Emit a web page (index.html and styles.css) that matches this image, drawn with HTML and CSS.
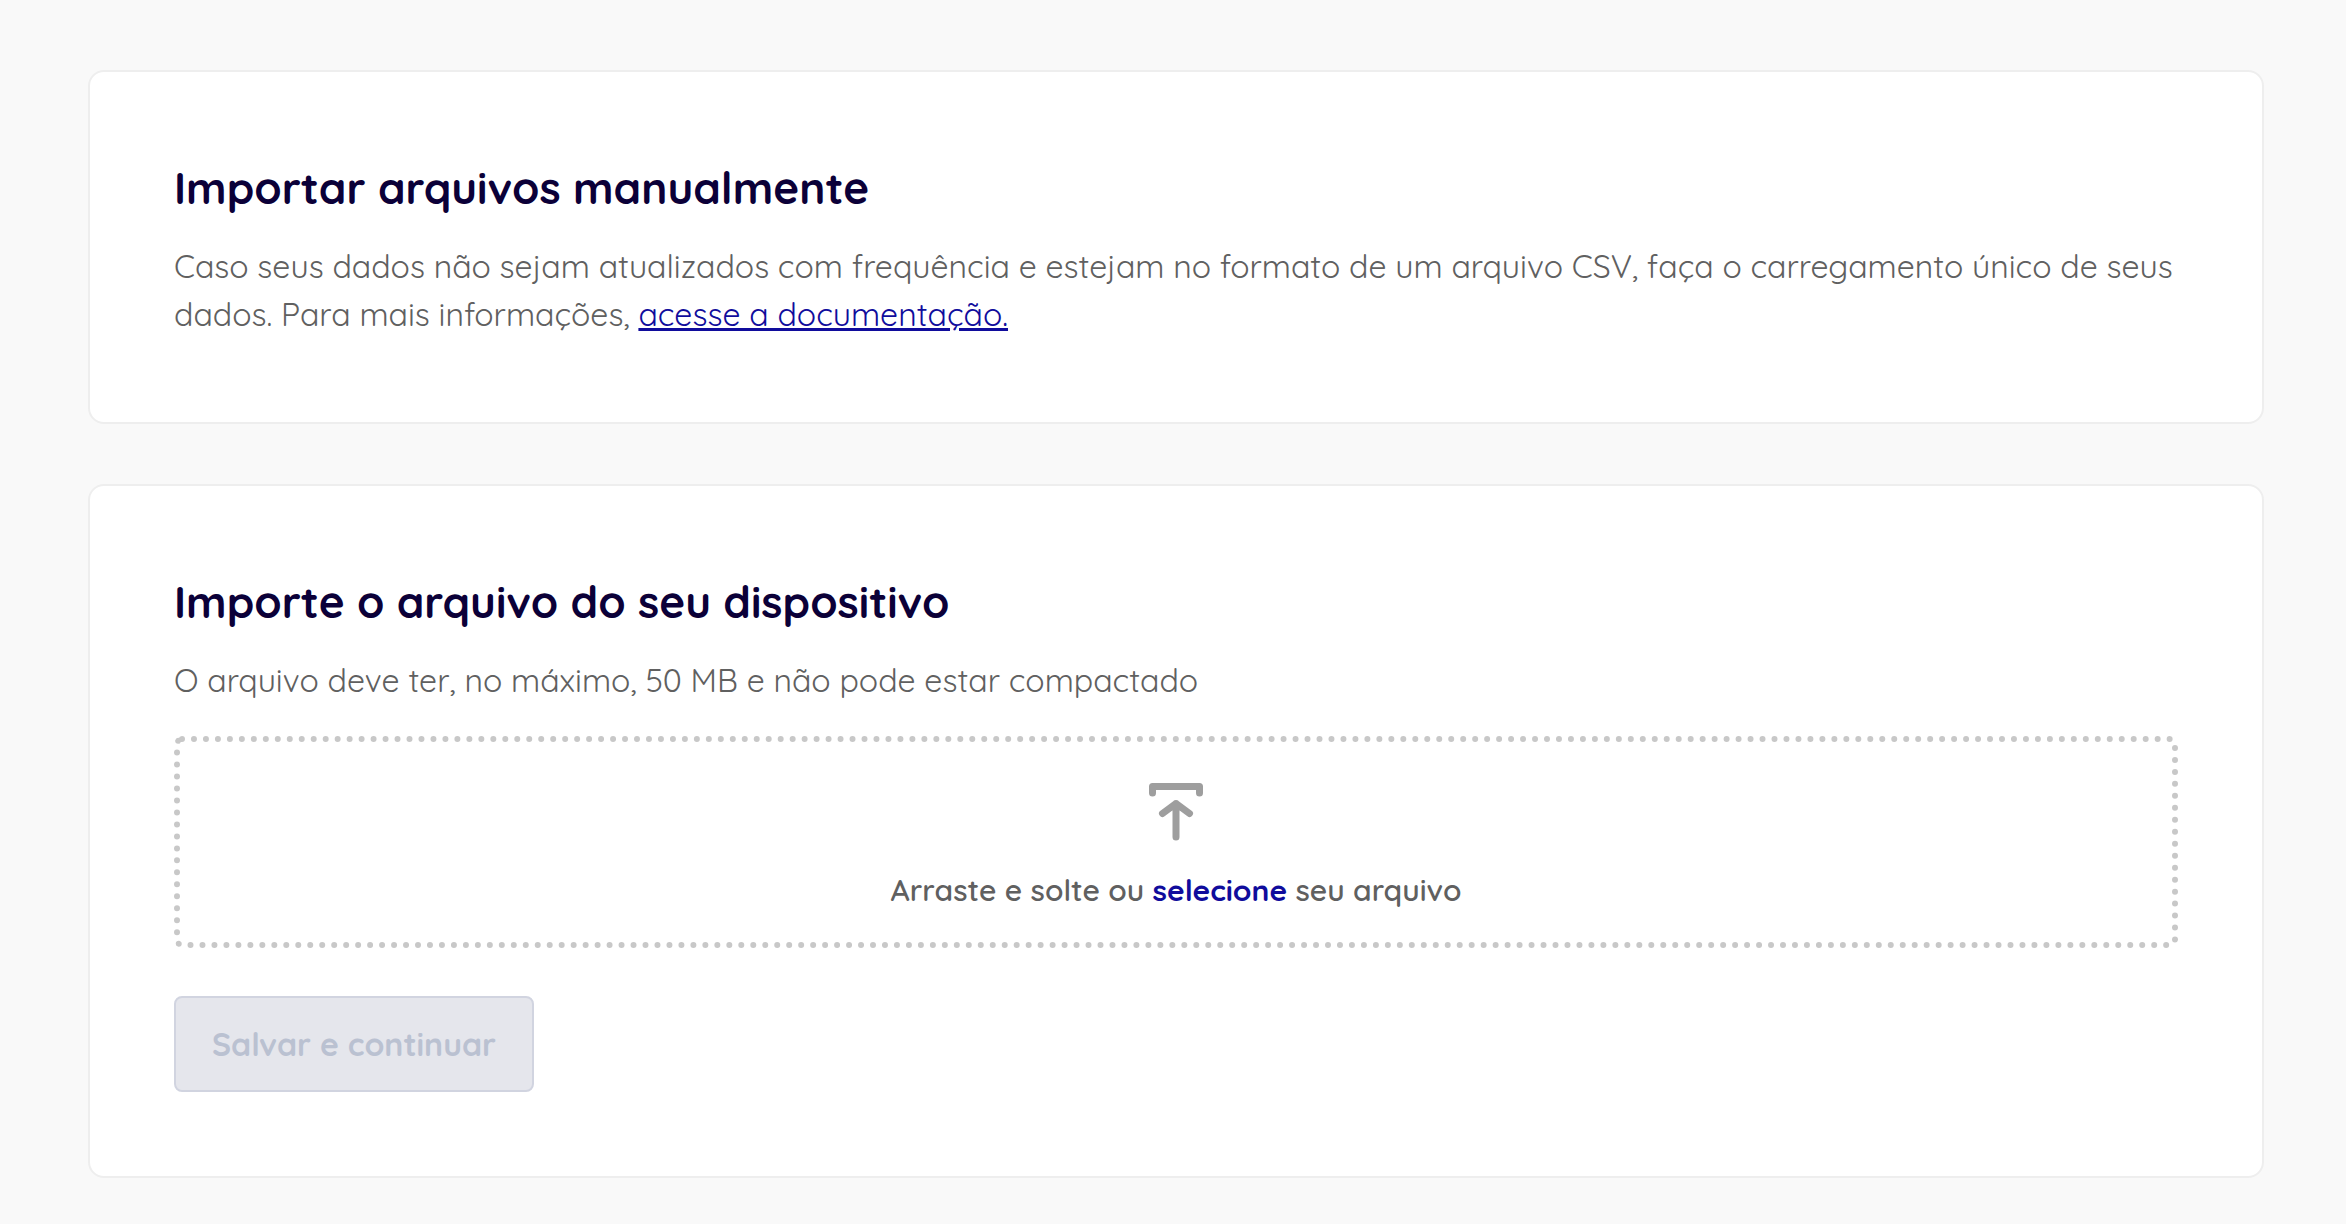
FILE: index.html
```
<!DOCTYPE html>
<html lang="pt-BR">
<head>
    <meta charset="UTF-8">
    <meta name="viewport" content="width=device-width, initial-scale=1.0">
    <title>Importar arquivos manualmente</title>
    <link rel="stylesheet" href="styles.css">
</head>
<body>
    <main class="container">
        <section class="card">
            <h2>Importar arquivos manualmente</h2>
            <p>
                Caso seus dados não sejam atualizados com frequência e estejam no formato de um arquivo CSV, faça o carregamento único de seus dados. Para mais informações, <a href="#">acesse a documentação.</a>
            </p>
        </section>

        <section class="card">
            <h2>Importe o arquivo do seu dispositivo</h2>
            <p>O arquivo deve ter, no máximo, 50 MB e não pode estar compactado</p>

            <div class="dropzone">
                <svg class="upload-icon" viewBox="0 0 54 58" fill="none" aria-hidden="true">
                    <path d="M3.5 10V3.5H50.5V10M27 54V20.5M13.5 30.5L27 20.5L40.5 30.5" stroke="#9e9e9e" stroke-width="7" stroke-linecap="round" stroke-linejoin="round"/>
                </svg>
                <div class="dropzone-text">Arraste e solte ou <a href="#">selecione</a> seu arquivo</div>
            </div>

            <button type="button" class="save-button" disabled>Salvar e continuar</button>
        </section>
    </main>
</body>
</html>
```
FILE: styles.css
```
* {
    box-sizing: border-box;
}
body {
    margin: 0;
    font-family: Quicksand, Inter, sans-serif;
    background-color: #f9f9f9;
    color: #606060;
}
.container {
    display: flex;
    flex-direction: column;
    gap: 60px;
    padding: 70px 82px 46px 88px;
}
.card {
    background-color: #fff;
    border: 2px solid #eee;
    border-radius: 16px;
    padding: 84px;
}
h2 {
    margin: 0 0 22px;
    font-size: 44px;
    line-height: 64px;
    font-weight: 700;
    color: #0b0038;
}
p {
    margin: 0;
    font-size: 32px;
    line-height: 48px;
    font-weight: 400;
}
a {
    color: #100c9c;
}
.dropzone {
    display: flex;
    flex-direction: column;
    align-items: center;
    gap: 26px;
    margin: 32px 0 48px;
    padding: 41px 24px 29px;
    border: 6px dotted #c8c8c8;
    border-radius: 8px;
}
.upload-icon {
    width: 54px;
    height: 58px;
}
.dropzone-text {
    font-size: 30px;
    line-height: 46px;
    font-weight: 600;
}
.dropzone-text a {
    font-weight: 700;
    text-decoration: none;
}
.save-button {
    display: block;
    padding: 22px 36px;
    border: 2px solid #d1d4e0;
    border-radius: 8px;
    background-color: #e5e6ec;
    color: #bac1d1;
    font-family: inherit;
    font-size: 32px;
    line-height: 48px;
    font-weight: 700;
}
```
